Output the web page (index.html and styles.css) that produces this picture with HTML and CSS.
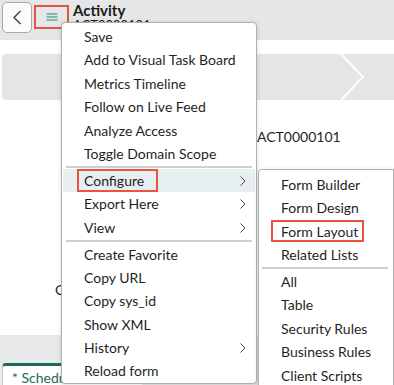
FILE: index.html
```html
<!DOCTYPE html>
<html lang="en">
<head>
<meta charset="utf-8">
<title>Activity</title>
<link rel="stylesheet" href="styles.css">
</head>
<body>
<div class="page">
  <header class="topbar">
    <button class="back-btn" aria-label="Back">
      <svg width="10" height="15" viewBox="0 0 10 15"><path d="M8.5 1 L2 7.5 L8.5 14" fill="none" stroke="#3a3a3a" stroke-width="1.3"/></svg>
    </button>
    <button class="menu-btn" aria-label="Menu">
      <svg width="12" height="8" viewBox="0 0 12 8"><path d="M0.5 1H11.5M0.5 4H11.5M0.5 7H11.5" stroke="#2b8a67" stroke-width="1.2"/></svg>
    </button>
    <div class="title">
      <div class="title-main">Activity</div>
      <div class="title-sub">ACT0000101</div>
    </div>
  </header>

  <div class="process">
    <div class="step"></div>
    <svg class="chev" width="26" height="46" viewBox="0 0 26 46"><path d="M2 0 L24 23 L2 46" fill="none" stroke="#ffffff" stroke-width="2"/></svg>
    <div class="step"></div>
  </div>

  <div class="form">
    <div class="label label-right">Number</div>
    <div class="value">ACT0000101</div>
    <div class="label">Created</div>
    <div class="value"></div>
  </div>

  <div class="tabs">
    <div class="tab">* Schedule</div>
  </div>
</div>

<ul class="ctx-menu">
  <li class="item">Save</li>
  <li class="item">Add to Visual Task Board</li>
  <li class="item">Metrics Timeline</li>
  <li class="item">Follow on Live Feed</li>
  <li class="item">Analyze Access</li>
  <li class="item">Toggle Domain Scope</li>
  <li class="sep"></li>
  <li class="item active">Configure<span class="mark mark-configure"></span><svg class="arrow" width="6" height="10" viewBox="0 0 6 10"><path d="M0.5 0.5 L5 5 L0.5 9.5" fill="none" stroke="#4a4a4a" stroke-width="1"/></svg></li>
  <li class="item">Export Here<svg class="arrow" width="6" height="10" viewBox="0 0 6 10"><path d="M0.5 0.5 L5 5 L0.5 9.5" fill="none" stroke="#4a4a4a" stroke-width="1"/></svg></li>
  <li class="item">View<svg class="arrow" width="6" height="10" viewBox="0 0 6 10"><path d="M0.5 0.5 L5 5 L0.5 9.5" fill="none" stroke="#4a4a4a" stroke-width="1"/></svg></li>
  <li class="sep"></li>
  <li class="item">Create Favorite</li>
  <li class="item">Copy URL</li>
  <li class="item">Copy sys_id</li>
  <li class="item">Show XML</li>
  <li class="item">History<svg class="arrow" width="6" height="10" viewBox="0 0 6 10"><path d="M0.5 0.5 L5 5 L0.5 9.5" fill="none" stroke="#4a4a4a" stroke-width="1"/></svg></li>
  <li class="item">Reload form</li>
</ul>

<ul class="sub-menu">
  <li class="item">Form Builder</li>
  <li class="item">Form Design</li>
  <li class="item">Form Layout<span class="mark mark-layout"></span></li>
  <li class="item">Related Lists</li>
  <li class="sep"></li>
  <li class="item">All</li>
  <li class="item">Table</li>
  <li class="item">Security Rules</li>
  <li class="item">Business Rules</li>
  <li class="item">Client Scripts</li>
</ul>
</body>
</html>
```

FILE: styles.css
```css
* { box-sizing: border-box; }

html, body {
  margin: 0;
  padding: 0;
}

body {
  width: 394px;
  height: 385px;
  overflow: hidden;
  position: relative;
  background: #ffffff;
  font-family: Lato, "Noto Sans", sans-serif;
  color: #1f1f1f;
}

.page {
  display: flex;
  flex-direction: column;
}

/* Header */
.topbar {
  height: 40px;
  background: #e5e6e7;
  display: flex;
  align-items: flex-start;
  padding: 2px 0 0 2px;
}

.back-btn {
  width: 30px;
  height: 31px;
  border: 1px solid #a6aaac;
  border-radius: 5px;
  background: #fbfbfb;
  display: flex;
  align-items: center;
  justify-content: center;
  padding: 0;
}

.menu-btn {
  margin: 3px 0 0 2px;
  width: 35px;
  height: 24px;
  border: 2px solid #e8543f;
  background: transparent;
  display: flex;
  align-items: center;
  justify-content: center;
  padding: 0;
}

.title {
  margin: -1px 0 0 4px;
}

.title-main {
  font-size: 15px;
  font-weight: 700;
  line-height: 18px;
  color: #1a1a1a;
}

.title-sub {
  margin-top: -2px;
  font-size: 13px;
  line-height: 16px;
  color: #1a1a1a;
}

/* Process flow */
.process {
  margin: 14px 0 0 2px;
  height: 46px;
  background: #e4e5e6;
  border-radius: 4px 0 0 4px;
  display: flex;
}

.step {
  flex: 0 0 337px;
}

.step:last-child {
  flex: 1;
}

.chev {
  flex: 0 0 26px;
  display: block;
}

/* Form */
.form {
  height: 235px;
  padding: 28px 0 0 55px;
  display: grid;
  grid-template-columns: 202px 1fr;
  grid-auto-rows: 18px;
  row-gap: 135px;
  font-size: 14px;
  line-height: 18px;
}

.label, .value {
  white-space: nowrap;
}

.label-right {
  text-align: right;
  padding-right: 12px;
}

/* Tabs */
.tabs {
  height: 50px;
  background: #e8e9ea;
  padding: 28px 0 0 2px;
}

.tab {
  width: 140px;
  height: 30px;
  background: #ffffff;
  border-top: 3px solid #1d6b57;
  border-left: 1px solid #c9cccd;
  border-radius: 4px 4px 0 0;
  padding: 3px 0 0 9px;
  font-size: 14px;
  line-height: 18px;
  color: #1d6b57;
}

/* Context menu */
.ctx-menu, .sub-menu {
  list-style: none;
  margin: 0;
  position: absolute;
  background: #ffffff;
  border: 1px solid #adb1b2;
  box-shadow: 0 1px 5px rgba(0, 0, 0, 0.15);
}

.ctx-menu {
  left: 61px;
  top: 22px;
  width: 196px;
  height: 362px;
  border-radius: 4px;
  padding: 2px 1px 0;
}

.sub-menu {
  left: 258px;
  top: 169px;
  width: 136px;
  height: 230px;
  border-radius: 4px 0 0 0;
  padding: 3px 0 0;
}

.item {
  position: relative;
  height: 23.4px;
  line-height: 23.4px;
  padding-left: 21px;
  font-size: 14px;
  white-space: nowrap;
  color: #1f1f1f;
}

.sub-menu .item {
  padding-left: 22px;
}

.item.active {
  background: #e8eff1;
}

.sep {
  height: 2px;
  background: #cdd0d1;
  margin: 0.5px 3px 1px;
}

.sub-menu .sep {
  margin: 0.5px 5px 1px 3px;
}

.arrow {
  position: absolute;
  right: 9px;
  top: 7px;
}

.mark {
  position: absolute;
  border: 2px solid #e8543f;
  pointer-events: none;
}

.mark-configure {
  left: 14px;
  top: 0;
  width: 81px;
  height: 23px;
}

.mark-layout {
  left: 12px;
  top: 0;
  width: 93px;
  height: 22px;
}
```
